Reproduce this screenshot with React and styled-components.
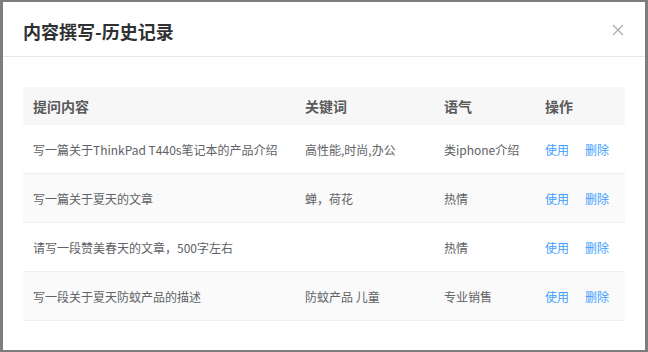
import React from "react";
import styled, { createGlobalStyle } from "styled-components";

const Global = createGlobalStyle`
  html, body { margin: 0; padding: 0; }
  body {
    background: #7d7d7d;
    font-family: "Noto Sans CJK SC", "Noto Sans", sans-serif;
    width: 648px;
    height: 352px;
    overflow: hidden;
  }
`;

const Backdrop = styled.div`
  width: 648px;
  height: 352px;
  box-sizing: border-box;
  padding: 2px 4px 2px 3px;
  display: flex;
`;

const Dialog = styled.div`
  flex: 1;
  background: #fff;
  display: flex;
  flex-direction: column;
`;

const Header = styled.div`
  height: 54px;
  border-bottom: 1px solid #e8e8e8;
  display: flex;
  align-items: center;
  justify-content: space-between;
  padding: 0 20px 0 20px;
  box-sizing: content-box;
`;

const Title = styled.h2`
  margin: 0;
  margin-top: 3px;
  font-size: 18px;
  font-weight: 700;
  color: #303133;
  line-height: 24px;
`;

const Close = styled.button`
  border: 0;
  background: none;
  padding: 0;
  width: 13px;
  height: 13px;
  display: flex;
  align-items: center;
  justify-content: center;
  margin-top: 2px;
  margin-right: 1px;
  cursor: pointer;
`;

const Body = styled.div`
  padding: 30px 20px 0 20px;
`;

const Table = styled.table`
  width: 602px;
  border-collapse: collapse;
  table-layout: fixed;
`;

const Th = styled.th`
  background: #f7f7f7;
  height: 38px;
  padding: 0 10px;
  text-align: left;
  font-size: 14px;
  font-weight: 700;
  color: #5a5a5a;
  box-sizing: border-box;
`;

const Tr = styled.tr`
  background: ${(p) => (p.$striped ? "#fafafa" : "#fff")};
  border-bottom: 1px solid #ebeef5;
`;

const Td = styled.td`
  height: 48px;
  padding: 0 10px;
  font-size: 12px;
  color: #606266;
  white-space: nowrap;
  overflow: hidden;
`;

const Actions = styled.div`
  display: flex;
  gap: 16px;
`;

const Link = styled.a`
  color: #409eff;
  font-size: 12px;
  cursor: pointer;
`;

const rows = [
  { q: "写一篇关于ThinkPad T440s笔记本的产品介绍", k: "高性能,时尚,办公", t: "类iphone介绍" },
  { q: "写一篇关于夏天的文章", k: "蝉，荷花", t: "热情" },
  { q: "请写一段赞美春天的文章，500字左右", k: "", t: "热情" },
  { q: "写一段关于夏天防蚊产品的描述", k: "防蚊产品 儿童", t: "专业销售" },
];

export default function App() {
  return (
    <>
      <Global />
      <Backdrop>
        <Dialog>
          <Header>
            <Title>内容撰写-历史记录</Title>
            <Close aria-label="close">
              <svg width="12" height="12" viewBox="0 0 12 12">
                <path d="M1 1 L11 11 M11 1 L1 11" stroke="#a8abb2" strokeWidth="1.2" fill="none" />
              </svg>
            </Close>
          </Header>
          <Body>
            <Table>
              <colgroup>
                <col style={{ width: 272 }} />
                <col style={{ width: 139 }} />
                <col style={{ width: 101 }} />
                <col style={{ width: 90 }} />
              </colgroup>
              <thead>
                <tr>
                  <Th>提问内容</Th>
                  <Th>关键词</Th>
                  <Th>语气</Th>
                  <Th>操作</Th>
                </tr>
              </thead>
              <tbody>
                {rows.map((r, i) => (
                  <Tr key={i} $striped={i % 2 === 1}>
                    <Td>{r.q}</Td>
                    <Td>{r.k}</Td>
                    <Td>{r.t}</Td>
                    <Td>
                      <Actions>
                        <Link>使用</Link>
                        <Link>删除</Link>
                      </Actions>
                    </Td>
                  </Tr>
                ))}
              </tbody>
            </Table>
          </Body>
        </Dialog>
      </Backdrop>
    </>
  );
}
